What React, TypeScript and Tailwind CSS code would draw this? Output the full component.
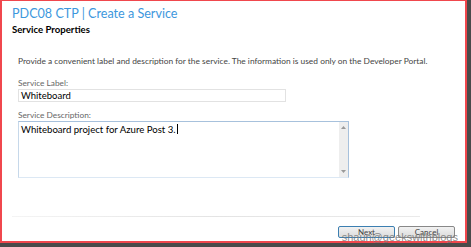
export default function App() {
  return (
    <div className="flex h-[247px] w-[471px] flex-col bg-[#4a4a4a] font-['Lato',sans-serif]">
      <div className="flex h-[243px] w-[467px] flex-col border-2 border-t-[1px] border-[#f0474d] bg-white">
        <div className="px-[10px] pt-[4px]">
          <h1 className="text-[12.6px] leading-[17px] text-[#3d97dd]">PDC08 CTP | Create a Service</h1>
          <h2 className="mt-[2px] text-[9.6px] leading-[12px] font-bold text-black">Service Properties</h2>
        </div>
        <div className="px-[16px] pt-[20px]">
          <p className="whitespace-nowrap text-[8.4px] leading-[11px] text-[#444]">
            Provide a convenient label and description for the service. The information is used only on the Developer Portal.
          </p>
          <label className="mt-[12px] block text-[8.3px] leading-[9px] text-[#666]">Service Label:</label>
          <div className="mt-[1px] h-[13px] w-[268px] border border-[#e2e2e2] px-[2px] text-[9.5px] leading-[11px] text-black">
            Whiteboard
          </div>
          <label className="mt-[9px] block text-[8.3px] leading-[9px] text-[#666]">Service Description:</label>
          <div className="mt-[1px] flex h-[57px] w-[331px] border border-[#a7c1dc] border-b-[#dce8f4] border-l-[#c6d8ea]">
            <div className="flex-1 px-[2px] pt-[1px] text-[9.6px] leading-[12px] text-black">
              Whiteboard project for Azure Post 3.<span className="ml-[1px] inline-block h-[10px] w-px translate-y-[1px] bg-black" />
            </div>
            <div className="flex w-[9px] flex-col items-center justify-between bg-[#eeeeee] py-[4px]">
              <svg width="5" height="3" viewBox="0 0 5 3"><path d="M0 3h5L2.5 0z" fill="#999" /></svg>
              <svg width="5" height="3" viewBox="0 0 5 3"><path d="M0 0h5L2.5 3z" fill="#999" /></svg>
            </div>
          </div>
        </div>
        <div className="mt-auto px-[10px]">
          <div className="h-px w-[408px] bg-gradient-to-r from-[#f4f4f4] via-[#e4e4e4] to-[#eaeaea]" />
          <div className="relative flex justify-end gap-[3px] pt-[9px] pb-[3px]">
            <button className="h-[12px] w-[57px] rounded-[2px] border border-[#3c7fb1] bg-gradient-to-b from-[#f2f2f2] to-[#dcdcdc] text-[8px] leading-[10px] text-[#444]">
              Next
            </button>
            <button className="h-[12px] w-[57px] rounded-[2px] border border-[#888] bg-gradient-to-b from-[#f2f2f2] to-[#dcdcdc] text-[8px] leading-[10px] text-[#444]">
              Cancel
            </button>
            <span className="absolute right-[-3px] bottom-[-3px] font-['Liberation_Sans',sans-serif] text-[11px] leading-[14px] text-[#777]/85">
              shaun@geekswithblogs
            </span>
          </div>
        </div>
      </div>
    </div>
  );
}
